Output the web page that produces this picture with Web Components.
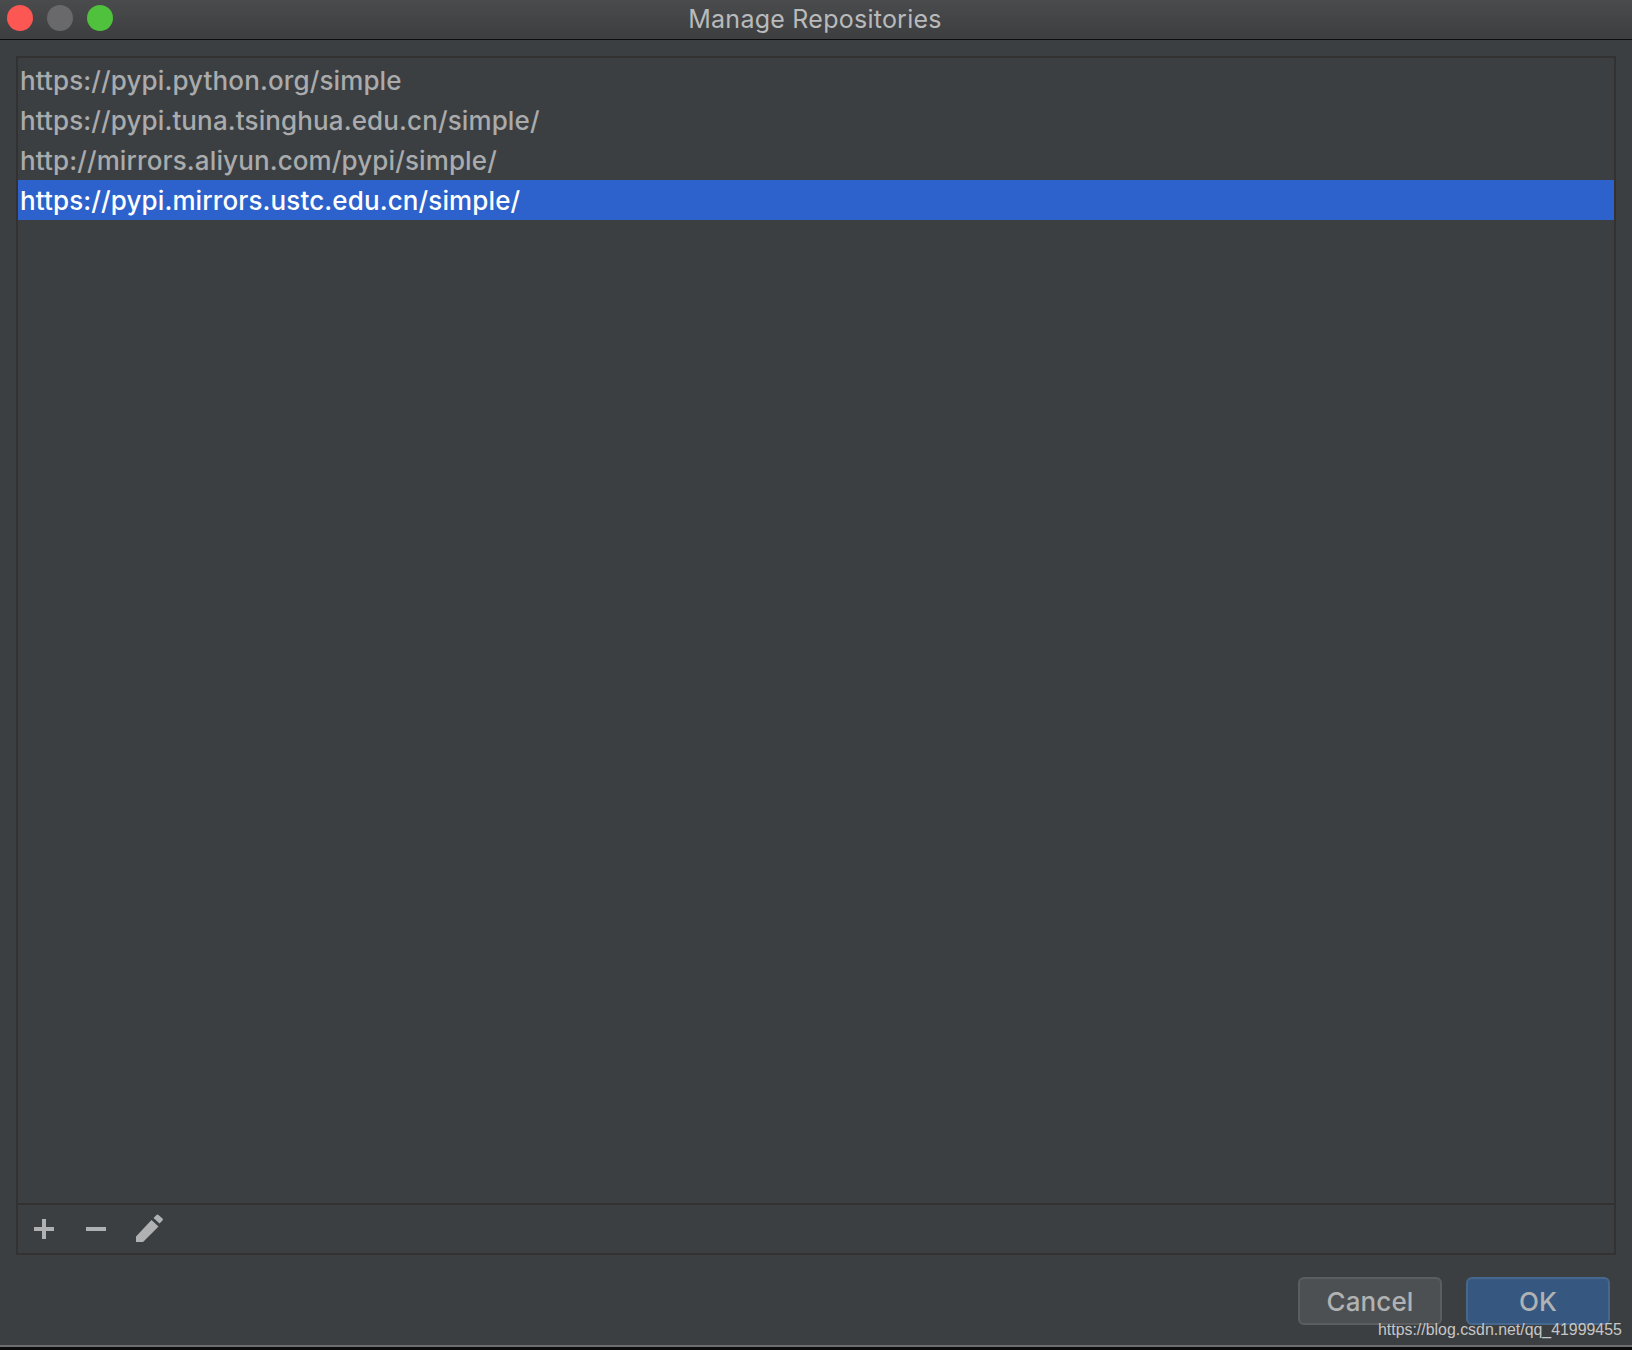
<!DOCTYPE html>
<html>
<head>
<meta charset="utf-8">
<title>Manage Repositories</title>
<style>
  html, body { margin: 0; padding: 0; background: #3c3f41; }
  body { width: 1632px; height: 1350px; overflow: hidden; font-family: Inter, "Liberation Sans", sans-serif; }
</style>
</head>
<body>
<repo-dialog heading="Manage Repositories">
  <repo-list>
    <repo-row>https://pypi.python.org/simple</repo-row>
    <repo-row>https://pypi.tuna.tsinghua.edu.cn/simple/</repo-row>
    <repo-row>http://mirrors.aliyun.com/pypi/simple/</repo-row>
    <repo-row selected>https://pypi.mirrors.ustc.edu.cn/simple/</repo-row>
  </repo-list>
  <dialog-button slot="buttons">Cancel</dialog-button>
  <dialog-button slot="buttons" primary>OK</dialog-button>
</repo-dialog>

<script>
/**
 * The window with title bar, content, buttons and the image watermark.
 */
const dialogTemplate = document.createElement('template')
dialogTemplate.innerHTML = `
  <style>
    :host {
      display: flex;
      flex-direction: column;
      position: relative;
      width: 1632px;
      height: 1350px;
      background: #3c3f41;
    }
    #titlebar {
      flex: none;
      box-sizing: border-box;
      height: 40px;
      display: grid;
      grid-template-columns: 1fr auto 1fr;
      align-items: center;
      background: linear-gradient(#4a4b4d, #3d3e40);
      border-bottom: 1px solid #0d0d0d;
    }
    #lights {
      display: flex;
      gap: 14px;
      padding: 0 0 3px 7px;
    }
    #lights span {
      width: 26px;
      height: 26px;
      border-radius: 50%;
    }
    #title {
      font-size: 25px;
      line-height: 36px;
      letter-spacing: 0.25px;
      color: #b9babb;
      padding: 0 2px 2px 0;
    }
    #content {
      flex: 1;
      min-height: 0;
      display: flex;
      flex-direction: column;
      padding: 16px 16px 0 16px;
    }
    #footer {
      flex: none;
      display: flex;
      justify-content: flex-end;
      gap: 24px;
      padding: 22px 22px 0 0;
      height: 90px;
      box-sizing: border-box;
    }
    #edge {
      flex: none;
      height: 2px;
      background: #6d6e70;
    }
    #black {
      flex: none;
      height: 3px;
      background: #0c0c0c;
    }
    #watermark {
      position: absolute;
      left: 1378px;
      top: 1321px;
      font: 15.9px/18px "Liberation Sans", Arial, sans-serif;
      color: #c6c7c8;
      white-space: nowrap;
    }
  </style>
  <div id="titlebar">
    <div id="lights">
      <span style="background:#fc5753"></span>
      <span style="background:#69696b"></span>
      <span style="background:#4fc13c"></span>
    </div>
    <div id="title"></div>
    <div></div>
  </div>
  <div id="content"><slot></slot></div>
  <div id="footer"><slot name="buttons"></slot></div>
  <div id="edge"></div>
  <div id="black"></div>
  <div id="watermark">https://blog.csdn.net/qq_41999455</div>
`

class RepoDialog extends HTMLElement {
  constructor () {
    super()
    this.attachShadow({ mode: 'open' }).appendChild(dialogTemplate.content.cloneNode(true))
  }

  connectedCallback () {
    this.shadowRoot.querySelector('#title').textContent = this.getAttribute('heading')
  }
}
customElements.define('repo-dialog', RepoDialog)

/**
 * Bordered list box with its add / remove / edit toolbar.
 */
const listTemplate = document.createElement('template')
listTemplate.innerHTML = `
  <style>
    :host {
      display: flex;
      flex-direction: column;
      flex: 1;
      min-height: 0;
      border: 2px solid #323232;
    }
    #rows {
      flex: 1;
      min-height: 0;
      padding-top: 2px;
    }
    #toolbar {
      flex: none;
      box-sizing: border-box;
      height: 50px;
      border-top: 2px solid #323232;
      display: flex;
      align-items: center;
      padding-left: 10px;
      gap: 20px;
    }
    svg { display: block; width: 32px; height: 32px; fill: #afb1b3; }
  </style>
  <div id="rows"><slot></slot></div>
  <div id="toolbar">
    <svg viewBox="0 0 32 32"><path d="M14 6h4v8h8v4h-8v8h-4v-8H6v-4h8z"/></svg>
    <svg viewBox="0 0 32 32"><path d="M6 14h20v4H6z"/></svg>
    <svg viewBox="0 0 32 32"><path d="M4 24.500 19.500 8l7 6.500L11 30H4z M21.500 6l3-3q1-.8 2 0l4 3.500q1 1 0 2l-3 3z" transform="translate(0 -1)"/></svg>
  </div>
`

class RepoList extends HTMLElement {
  constructor () {
    super()
    this.attachShadow({ mode: 'open' }).appendChild(listTemplate.content.cloneNode(true))
  }
}
customElements.define('repo-list', RepoList)

/**
 * One repository address in the list.
 */
const rowTemplate = document.createElement('template')
rowTemplate.innerHTML = `
  <style>
    :host {
      display: block;
      height: 40px;
      line-height: 42px;
      padding-left: 2px;
      font-size: 26px;
      font-weight: 500;
      letter-spacing: 0.12px;
      color: #a9abad;
      white-space: nowrap;
    }
    :host([selected]) {
      background: #2d62cc;
      color: #ffffff;
    }
  </style>
  <slot></slot>
`

class RepoRow extends HTMLElement {
  constructor () {
    super()
    this.attachShadow({ mode: 'open' }).appendChild(rowTemplate.content.cloneNode(true))
  }
}
customElements.define('repo-row', RepoRow)

/**
 * Dialog button, plain or primary.
 */
const buttonTemplate = document.createElement('template')
buttonTemplate.innerHTML = `
  <style>
    :host {
      display: flex;
      align-items: center;
      justify-content: center;
      box-sizing: border-box;
      width: 144px;
      height: 48px;
      border: 2px solid #5b5d5f;
      border-radius: 6px;
      background: #4d5052;
      color: #b0b2b3;
      font-size: 26px;
      font-weight: 500;
      letter-spacing: 0.1px;
    }
    :host([primary]) {
      background: #365880;
      border-color: #46688f;
    }
  </style>
  <slot></slot>
`

class DialogButton extends HTMLElement {
  constructor () {
    super()
    this.attachShadow({ mode: 'open' }).appendChild(buttonTemplate.content.cloneNode(true))
  }
}
customElements.define('dialog-button', DialogButton)
</script>
</body>
</html>
